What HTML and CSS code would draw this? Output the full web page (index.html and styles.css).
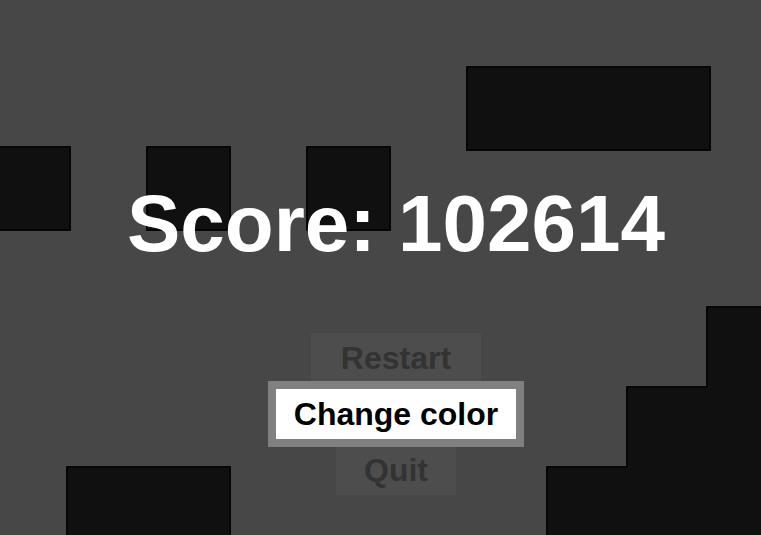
FILE: index.html
```html
<!DOCTYPE html>
<html lang="en">
<head>
<meta charset="utf-8">
<title>Game Over</title>
<link rel="stylesheet" href="styles.css">
</head>
<body>
<div class="stage">
  <svg class="scene" width="761" height="535" viewBox="0 0 761 535" xmlns="http://www.w3.org/2000/svg">
    <g class="blocks">
      <rect x="-13" y="147" width="83" height="83"/>
      <rect x="147" y="147" width="83" height="83"/>
      <rect x="307" y="147" width="83" height="83"/>
      <rect x="467" y="67" width="243" height="83"/>
      <rect x="67" y="467" width="163" height="83"/>
      <polygon points="707,307 775,307 775,550 547,550 547,467 627,467 627,387 707,387"/>
    </g>
  </svg>
  <div class="overlay">
    <div class="score">Score: 102614</div>
    <div class="menu">
      <div class="btn btn-restart">Restart</div>
      <div class="btn btn-color selected">Change color</div>
      <div class="btn btn-quit">Quit</div>
    </div>
  </div>
</div>
</body>
</html>
```
FILE: styles.css
```css
html, body {
  margin: 0;
  padding: 0;
  background: #474747;
  overflow: hidden;
}

.stage {
  position: relative;
  width: 761px;
  height: 535px;
  overflow: hidden;
  background: #474747;
  font-family: "Liberation Sans", Arial, sans-serif;
}

.scene {
  display: block;
}

.blocks rect,
.blocks polygon {
  fill: #101010;
  stroke: #050505;
  stroke-width: 2;
}

.overlay {
  position: absolute;
  top: 0;
  left: 0;
  width: 792px;
  display: flex;
  flex-direction: column;
  align-items: center;
  padding-top: 184px;
}

.score {
  color: #ffffff;
  font-weight: bold;
  font-size: 80px;
  line-height: 80px;
  white-space: nowrap;
}

.menu {
  margin-top: 69px;
  display: flex;
  flex-direction: column;
  align-items: center;
  gap: 6px;
}

.btn {
  height: 50px;
  line-height: 50px;
  font-size: 32px;
  font-weight: bold;
  text-align: center;
  background: #4d4d4d;
  color: #333333;
  white-space: nowrap;
}

.btn-restart { width: 170px; }
.btn-color { width: 240px; }
.btn-quit { width: 120px; }

.btn.selected {
  background: #ffffff;
  color: #000000;
  outline: 8px solid #808080;
  position: relative;
  z-index: 1;
}
```
